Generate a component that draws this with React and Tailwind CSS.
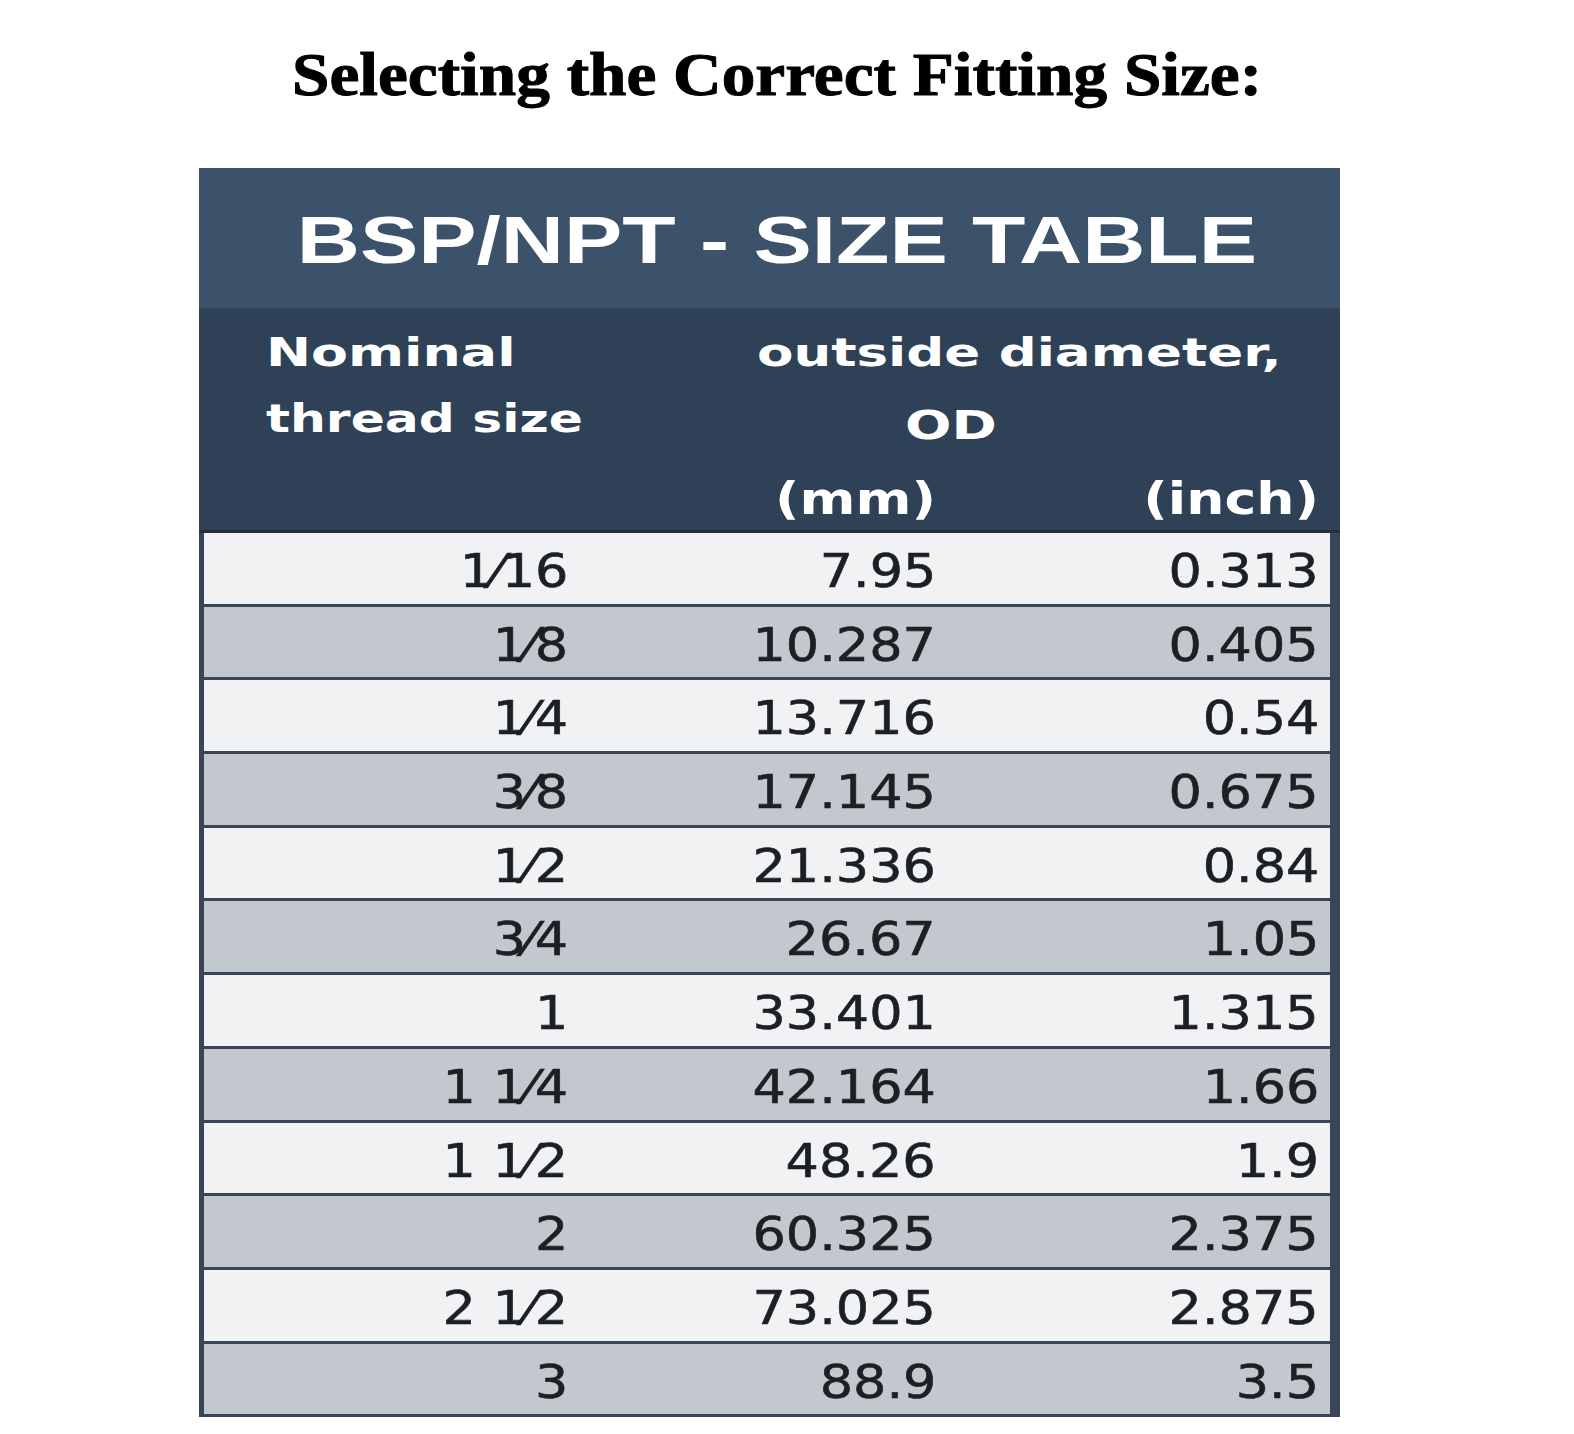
import React from 'react'

const rows = [
  ['1⁄16', '7.95', '0.313'],
  ['1⁄8', '10.287', '0.405'],
  ['1⁄4', '13.716', '0.54'],
  ['3⁄8', '17.145', '0.675'],
  ['1⁄2', '21.336', '0.84'],
  ['3⁄4', '26.67', '1.05'],
  ['1', '33.401', '1.315'],
  ['1 1⁄4', '42.164', '1.66'],
  ['1 1⁄2', '48.26', '1.9'],
  ['2', '60.325', '2.375'],
  ['2 1⁄2', '73.025', '2.875'],
  ['3', '88.9', '3.5'],
]

const sans = { fontFamily: '"DejaVu Sans", Verdana, sans-serif' }

export default function App(){
  return (
    <div className="min-h-screen bg-white pt-[34px] pb-[20px]">
      <h1 className="text-center pr-[20px] text-[62px] leading-[80px] font-bold text-black [-webkit-text-stroke:1px_#000]" style={{ fontFamily: '"Liberation Serif", "Times New Roman", serif' }}>
        <span className="inline-block scale-x-[1.085]">Selecting the Correct Fitting Size:</span>
      </h1>

      <div className="ml-[199px] w-[1141px] mt-[54px]">
        {/* title band */}
        <div className="h-[140px] bg-[#3c526a] flex items-center justify-center pl-[14px] pt-[4px]">
          <span className="inline-block scale-x-[1.305] text-[67px] font-bold text-white" style={{ fontFamily: '"Liberation Sans", Arial, sans-serif' }}>
            BSP/NPT - SIZE TABLE
          </span>
        </div>

        {/* column header */}
        <div className="h-[225px] bg-[#2e4157] border-b-[3px] border-[#24313f] text-white font-bold text-[39px] leading-[66px]" style={sans}>
          <div className="flex pt-[12px]">
            <div className="w-[558px] pl-[67px] whitespace-nowrap">
              <div><span className="inline-block origin-left scale-x-[1.38]">Nominal</span></div>
              <div><span className="inline-block origin-left scale-x-[1.29]">thread size</span></div>
            </div>
            <div className="flex-1 whitespace-nowrap">
              <div><span className="inline-block origin-left scale-x-[1.36]">outside diameter,</span></div>
              <div className="pl-[148px] leading-[80px]"><span className="inline-block origin-left scale-x-[1.4]">OD</span></div>
            </div>
          </div>
          <div className="grid grid-cols-[369px_368px_383px] leading-[70px] text-[44px] -mt-[2px]">
            <div></div>
            <div className="text-right"><span className="inline-block origin-right scale-x-[1.22]">(mm)</span></div>
            <div className="text-right"><span className="inline-block origin-right scale-x-[1.22]">(inch)</span></div>
          </div>
        </div>

        {/* rows */}
        {rows.map((r, i) => (
          <div
            key={i}
            className={
              'grid grid-cols-[364px_368px_383px] h-[73.7px] items-center border-l-[5px] border-r-[10px] border-b-[3px] border-[#384657] text-[46px] text-[#1c1f24] [-webkit-text-stroke:0.6px_#1c1f24] ' +
              (i % 2 === 0 ? 'bg-[#f1f2f4]' : 'bg-[#c3c8cf]')
            }
            style={sans}
          >
            <div className="text-right pt-[4px]"><span className="inline-block origin-right scale-x-[1.14]">{r[0]}</span></div>
            <div className="text-right pt-[4px]"><span className="inline-block origin-right scale-x-[1.14]">{r[1]}</span></div>
            <div className="text-right pt-[4px]"><span className="inline-block origin-right scale-x-[1.14]">{r[2]}</span></div>
          </div>
        ))}
      </div>
    </div>
  )
}
